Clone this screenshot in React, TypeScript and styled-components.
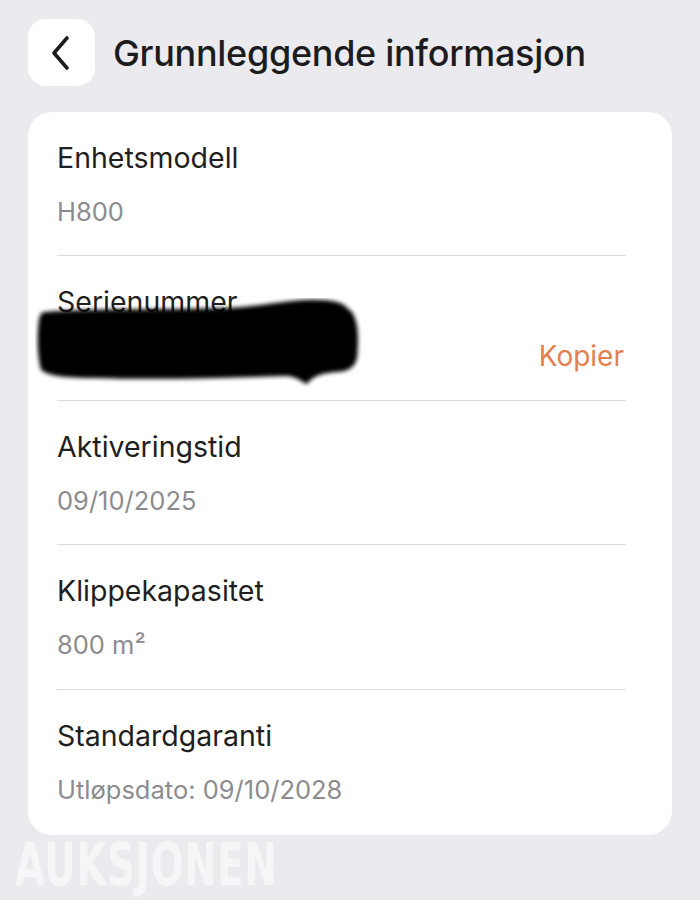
import * as React from "react";
import styled, { createGlobalStyle } from "styled-components";

const Global = createGlobalStyle`
  html, body {
    margin: 0;
    padding: 0;
    background: #ebebef;
  }
  body {
    font-family: Inter, "Noto Sans", sans-serif;
    -webkit-font-smoothing: antialiased;
  }
`;

const Page = styled.div`
  width: 700px;
  height: 900px;
  box-sizing: border-box;
  padding: 19px 28px 0;
  display: flex;
  flex-direction: column;
  overflow: hidden;
`;

const Header = styled.div`
  display: flex;
  align-items: center;
  gap: 18px;
  height: 67px;
`;

const BackButton = styled.button`
  width: 67px;
  height: 67px;
  border: none;
  border-radius: 18px;
  background: #fff;
  display: flex;
  align-items: center;
  justify-content: center;
  padding: 0;
  cursor: pointer;
`;

const Title = styled.h1`
  margin: 0;
  font-size: 36px;
  font-weight: 500;
  color: #1c1c1e;
  letter-spacing: -0.3px;
`;

const Card = styled.div`
  margin-top: 26px;
  background: #fff;
  border-radius: 24px;
  padding: 0 46px 0 29px;
  display: flex;
  flex-direction: column;
`;

const Row = styled.div<{ $last?: boolean }>`
  position: relative;
  height: ${(p) => (p.$last ? 145 : 144.4)}px;
  box-sizing: border-box;
  padding-top: 28px;
  border-bottom: ${(p) => (p.$last ? "none" : "1px solid #dcdcdf")};
  display: flex;
  flex-direction: column;
  gap: 18px;
`;

const Label = styled.div`
  font-size: 28.5px;
  line-height: 36px;
  color: #1f1f21;
`;

const Value = styled.div`
  font-size: 25.5px;
  line-height: 36px;
  color: #8c8c90;
  display: flex;
  justify-content: space-between;
  align-items: center;
`;

const CopyButton = styled.span`
  color: #e2804f;
  font-size: 28px;
  margin-right: 2px;
`;

const Redaction = styled.svg`
  position: absolute;
  left: -22px;
  top: 42px;
  width: 330px;
  height: 90px;
`;

const Watermark = styled.div`
  margin-top: 4px;
  margin-left: -13px;
  font-family: "DejaVu Sans Condensed", "DejaVu Sans", sans-serif;
  font-weight: 700;
  font-size: 58px;
  line-height: 52px;
  letter-spacing: 1px;
  color: rgba(255, 255, 255, 0.55);
  transform: scaleX(0.74);
  transform-origin: left center;
`;

const rows = [
  { label: "Enhetsmodell", value: "H800" },
  { label: "Serienummer", value: "", copy: true },
  { label: "Aktiveringstid", value: "09/10/2025" },
  { label: "Klippekapasitet", value: "800 m²" },
  { label: "Standardgaranti", value: "Utløpsdato: 09/10/2028" },
];

export default function App() {
  return (
    <>
      <Global />
      <Page>
        <Header>
          <BackButton aria-label="Tilbake">
            <svg width="30" height="36" viewBox="0 0 30 36">
              <path
                d="M20 3 L7 18 L20 33"
                fill="none"
                stroke="#1c1c1e"
                strokeWidth="3.6"
                strokeLinecap="round"
                strokeLinejoin="round"
              />
            </svg>
          </BackButton>
          <Title>Grunnleggende informasjon</Title>
        </Header>
        <Card>
          {rows.map((r, i) => (
            <Row key={r.label} $last={i === rows.length - 1}>
              <Label>{r.label}</Label>
              <Value>
                <span>{r.value || "\u00a0"}</span>
                {r.copy && <CopyButton>Kopier</CopyButton>}
              </Value>
              {r.copy && (
                <Redaction viewBox="0 0 330 90">
                  <defs>
                    <filter id="soft" x="-10%" y="-20%" width="120%" height="140%">
                      <feGaussianBlur stdDeviation="2.2" />
                    </filter>
                  </defs>
                  <path
                    filter="url(#soft)"
                    fill="#000"
                    d="M10 14 C60 10 130 12 190 10 C220 9 240 4 270 2 C295 1 308 4 312 10 C324 16 324 40 322 60 C320 70 312 74 300 74 C285 76 278 78 272 86 C266 84 262 78 250 78 C190 80 120 82 60 80 C30 80 14 78 6 72 C2 56 2 36 4 22 C5 16 7 14 10 14 Z"
                  />
                </Redaction>
              )}
            </Row>
          ))}
        </Card>
        <Watermark>AUKSJONEN</Watermark>
      </Page>
    </>
  );
}
